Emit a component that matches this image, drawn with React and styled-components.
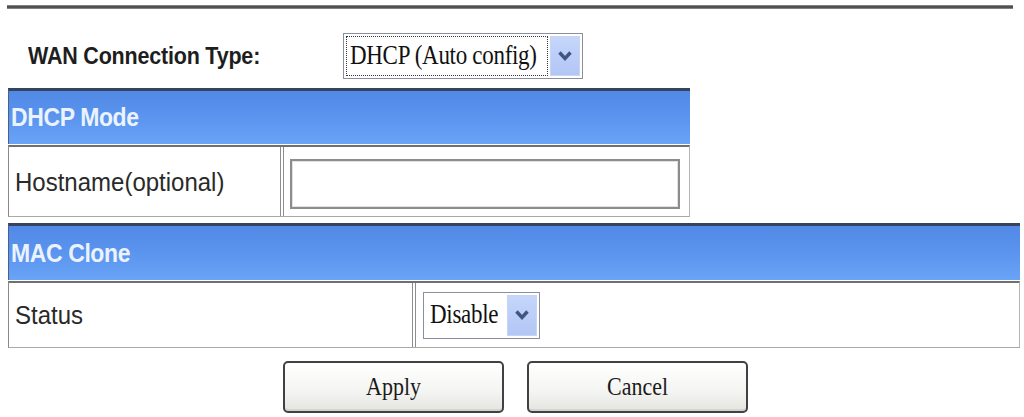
import React from 'react';
import styled, { createGlobalStyle } from 'styled-components';

const GlobalStyle = createGlobalStyle`
    html, body {
        margin: 0;
        padding: 0;
        background: #ffffff;
    }
    body {
        font-family: "Liberation Sans", Arial, sans-serif;
        color: #222;
    }
`

const Page = styled.div`
    width: 1024px;
    height: 417px;
    padding-left: 8px;
    box-sizing: border-box;
    overflow: hidden;
`

const Rule = styled.div`
    width: 1006px;
    height: 4px;
    margin: 5px 0 0 -1px;
    background: linear-gradient(#9a9a9a, #4a4a4a 40%, #555 70%, #a0a0a0);
`

const TypeRow = styled.div`
    display: flex;
    align-items: center;
    height: 46px;
    margin-top: 24px;
`

const TypeLabel = styled.div`
    width: 335px;
    padding-left: 20px;
    box-sizing: border-box;
    font-weight: bold;
    font-size: 21.5px;
    color: #1e1e1e;
    letter-spacing: -0.2px;
    transform: scaleY(1.12);
`

const Select = styled.div`
    display: flex;
    align-items: stretch;
    width: ${p => p.width}px;
    height: ${p => p.height}px;
    box-sizing: border-box;
    border: 1px solid #8a8f9c;
    padding: 2px;
    background: #fff;
`

const SelectText = styled.div`
    flex: 1;
    display: flex;
    align-items: center;
    padding-left: ${p => p.pad}px;
    font-family: "Liberation Serif", "Times New Roman", serif;
    font-size: 23px;
    letter-spacing: -0.3px;
    color: #111;
    border: 1px ${p => (p.focused ? 'dotted #333' : 'solid transparent')};
    white-space: nowrap;
    span {
        display: inline-block;
        transform: scaleY(1.15);
    }
`

const ArrowButton = styled.div`
    width: 28px;
    margin-left: 2px;
    display: flex;
    align-items: center;
    justify-content: center;
    background: linear-gradient(#c6d6fb, #b2c6f5);
    border: 1px solid #c8d5f2;
`

const Section = styled.div`
    width: ${p => p.width}px;
    margin-top: ${p => p.top}px;
`

const SectionHead = styled.div`
    height: ${p => p.height}px;
    box-sizing: border-box;
    display: flex;
    align-items: center;
    padding-left: 2px;
    border-top: 3px solid #35435e;
    border-left: 1px solid #4a5f8a;
    background: linear-gradient(#5189e6, #5d97f0 60%, #6aa4f7);
    color: #eaf3ff;
    font-weight: bold;
    font-size: 23px;
    letter-spacing: -0.4px;
    span {
        display: inline-block;
        transform: scaleY(1.12);
    }
`

const Row = styled.div`
    display: flex;
    height: ${p => p.height}px;
    margin-top: 1px;
    box-sizing: border-box;
    border-top: 2px solid #707070;
    border-left: 1px solid #8a8a8a;
    border-bottom: 1px solid #a9a9a9;
    border-right: 1px solid #b5b5b5;
`

const LabelCell = styled.div`
    width: ${p => p.width}px;
    box-sizing: border-box;
    display: flex;
    align-items: center;
    padding-left: 6px;
    border-right: 1px solid #8e8e8e;
    font-size: 24px;
    color: #2a2a2a;
    span {
        display: inline-block;
        transform: scaleY(1.1);
    }
`

const FieldCell = styled.div`
    flex: 1;
    display: flex;
    align-items: center;
    margin-left: 2px;
    padding-left: ${p => p.pad}px;
    border-left: 1px solid #8e8e8e;
`

const TextInput = styled.input`
    width: 390px;
    height: 50px;
    box-sizing: border-box;
    margin: 4px 0 0 0;
    border: 2px solid #8c8c8c;
    box-shadow: inset 0 0 0 1px #e2e2e2;
    background: #fff;
    outline: none;
`

const Buttons = styled.div`
    display: flex;
    gap: 23px;
    margin: 13px 0 0 275px;
`

const Button = styled.button`
    width: 221px;
    height: 52px;
    border: 2px solid #3e4244;
    border-radius: 5px;
    background: linear-gradient(#ffffff, #f4f4f2 60%, #e4e4e0);
    box-shadow: inset 0 -2px 0 #d4d4cf;
    font-family: "Liberation Serif", "Times New Roman", serif;
    font-size: 22px;
    color: #1a1a1a;
    padding: 0;
    span {
        display: inline-block;
        transform: scaleY(1.15);
    }
`

function Chevron() {
    return (
        <svg width="18" height="16" viewBox="0 0 18 16">
            <path d="M3.5 4.5 L9 10.5 L14.5 4.5" fill="none" stroke="#3f5683" strokeWidth="3.4" />
        </svg>
    );
}

function FakeSelect({ value, width, height, pad, focused }) {
    return (
        <Select width={width} height={height}>
            <SelectText pad={pad} focused={focused}><span>{value}</span></SelectText>
            <ArrowButton>
                <Chevron />
            </ArrowButton>
        </Select>
    );
}

export default function App() {
    return (
        <>
            <GlobalStyle />
            <Page>
                <Rule />
                <TypeRow>
                    <TypeLabel>WAN Connection Type:</TypeLabel>
                    <FakeSelect value="DHCP (Auto config)" width={240} height={46} pad={3} focused />
                </TypeRow>

                <Section width={682} top={9}>
                    <SectionHead height={56}><span>DHCP Mode</span></SectionHead>
                    <Row height={72}>
                        <LabelCell width={272}><span>Hostname(optional)</span></LabelCell>
                        <FieldCell pad={6}>
                            <TextInput type="text" />
                        </FieldCell>
                    </Row>
                </Section>

                <Section width={1012} top={6}>
                    <SectionHead height={57}><span>MAC Clone</span></SectionHead>
                    <Row height={67}>
                        <LabelCell width={404}><span>Status</span></LabelCell>
                        <FieldCell pad={7}>
                            <FakeSelect value="Disable" width={117} height={47} pad={3} />
                        </FieldCell>
                    </Row>
                </Section>

                <Buttons>
                    <Button><span>Apply</span></Button>
                    <Button><span>Cancel</span></Button>
                </Buttons>
            </Page>
        </>
    );
}
